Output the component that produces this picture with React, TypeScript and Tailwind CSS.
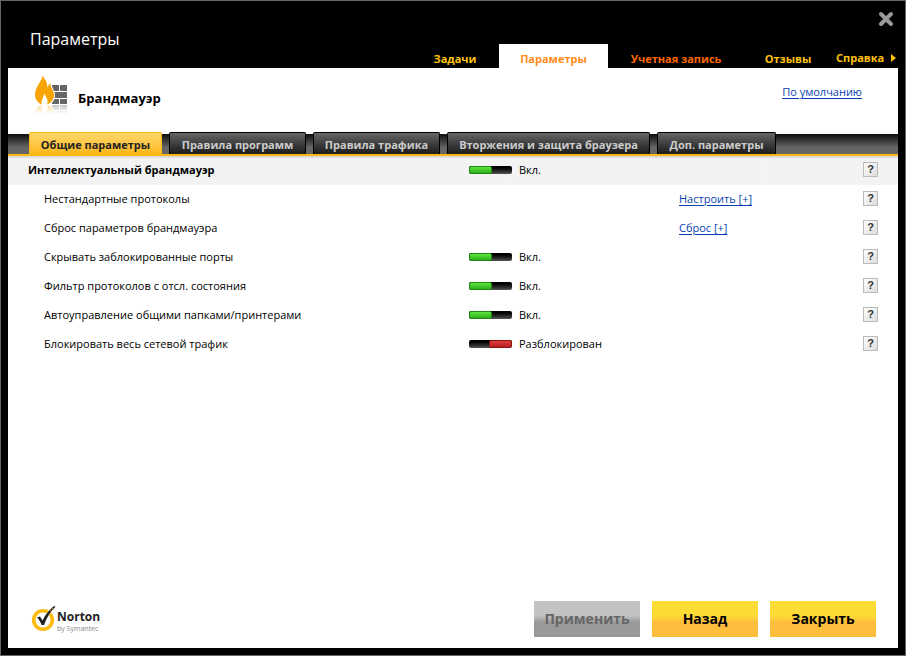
import clsx from 'clsx';

type Setting = {
  label: string;
  heading?: boolean;
  state?: 'on' | 'off';
  status?: string;
  link?: string;
};

const navItems = [
  { label: 'Задачи', className: 'w-[88px] text-[#ffc20e]' },
  { label: 'Параметры', className: 'w-[109px] bg-white text-[#ff8c1a]' },
  { label: 'Учетная запись', className: 'w-[136px] text-[#ff6600]' },
  { label: 'Отзывы', className: 'w-[88px] text-[#ffc20e]' },
];

const tabs = [
  { label: 'Общие параметры', className: 'w-[133px]' },
  { label: 'Правила программ', className: 'w-[137px]' },
  { label: 'Правила трафика', className: 'w-[127px]' },
  { label: 'Вторжения и защита браузера', className: 'w-[203px]' },
  { label: 'Доп. параметры', className: 'w-[119px]' },
];

const settings: Setting[] = [
  { label: 'Интеллектуальный брандмауэр', heading: true, state: 'on', status: 'Вкл.' },
  { label: 'Нестандартные протоколы', link: 'Настроить [+]' },
  { label: 'Сброс параметров брандмауэра', link: 'Сброс [+]' },
  { label: 'Скрывать заблокированные порты', state: 'on', status: 'Вкл.' },
  { label: 'Фильтр протоколов с отсл. состояния', state: 'on', status: 'Вкл.' },
  { label: 'Автоуправление общими папками/принтерами', state: 'on', status: 'Вкл.' },
  { label: 'Блокировать весь сетевой трафик', state: 'off', status: 'Разблокирован' },
];

function FirewallArt() {
  return (
    <>
      <path d="M17 10h7v6h-7zM25 10h7v6h-7zM19 17h13v6H19zM17 24h7v5h-7zM25 24h7v5h-7z" fill="#666" />
      <path
        d="M7.500 0C8 5 0 12 0 19.500 0 24 2.500 28 7 29.500c-1.500-4.500 1.500-6.500 2.500-11 1.500 4.500 4.500 6.500 2.500 11 4.500-1.500 7-5.500 7-9.500 0-5-4-7-3.500-12-2 1.500-2.500 3-2.500 5-.5-1-.8-2.500-1-4C11.500 4.500 8.500 4 7.500 0z"
        fill="#f7a400"
        stroke="#fff"
        strokeWidth="2"
        paintOrder="stroke"
      />
    </>
  );
}

function FirewallIcon() {
  return (
    <svg width="34" height="40" viewBox="0 0 34 40" aria-hidden="true">
      <defs>
        <linearGradient id="fade" x1="0" y1="29" x2="0" y2="39" gradientUnits="userSpaceOnUse">
          <stop offset="0" stopColor="#fff" stopOpacity="0.600" />
          <stop offset="1" stopColor="#fff" />
        </linearGradient>
      </defs>
      <g transform="matrix(1 0 0 -1 0 59)">
        <FirewallArt />
      </g>
      <rect x="-1" y="-1" width="36" height="31" fill="#fff" />
      <rect x="-1" y="30" width="36" height="11" fill="url(#fade)" />
      <FirewallArt />
    </svg>
  );
}

function NortonLogo() {
  return (
    <div className="flex items-center">
      <svg width="26" height="28" viewBox="0 0 26 28" aria-hidden="true">
        <circle cx="12" cy="15" r="9.300" fill="none" stroke="#fdbb11" strokeWidth="3.600" />
        <path
          d="M6 12.500l3-1 2.500 4C14 10 18 5 23 1l1.500.8C19 7 15.500 13 13 20h-2.500C9.500 17 8 14.500 6 12.500z"
          fill="#222"
          stroke="#fff"
          strokeWidth="1"
          paintOrder="stroke"
        />
        <path d="M18.500 4.500l2 2M20.500 2.800l1.500 1.500" stroke="#fdbb11" strokeWidth="0.800" />
      </svg>
      <div className="flex flex-col pt-1.5">
        <span className="text-[12px] leading-[14px] font-bold text-[#222]">Norton</span>
        <span className="text-[7px] leading-[10px] text-[#888]">by Symantec</span>
      </div>
    </div>
  );
}

function Toggle({ label, state }: { label: string; state: 'on' | 'off' }) {
  const on = state === 'on';
  return (
    <button
      type="button"
      role="switch"
      aria-checked={on}
      aria-label={label}
      className="flex h-2 w-[43px] overflow-hidden rounded-xs bg-linear-to-b from-black via-[#1c1c1c] to-[#555]"
    >
      <span
        className={clsx(
          'h-2 w-[23px] rounded-xs border',
          on
            ? 'border-[#1f8a12] bg-linear-to-b from-[#5ce63c] to-[#2fae1c]'
            : 'ml-auto border-[#8a1414] bg-linear-to-b from-[#e04040] to-[#b81c1c]',
        )}
      />
    </button>
  );
}

function SettingRow({ setting }: { setting: Setting }) {
  return (
    <li
      className={clsx(
        'grid h-[29px] grid-cols-[461fr_210fr_184fr_35fr] items-center pb-0.5',
        setting.heading && 'bg-linear-to-b from-[#d0d0d0] to-[#f3f3f3] to-10%',
      )}
    >
      <span className={clsx('whitespace-nowrap', setting.heading ? 'pl-5 font-bold' : 'pl-9')}>
        {setting.label}
      </span>
      <span className="flex items-center gap-[7px]">
        {setting.state && <Toggle label={setting.label} state={setting.state} />}
        {setting.status}
      </span>
      <span>
        {setting.link && (
          <a href="#" className="text-[#0a3fae] underline underline-offset-2">
            {setting.link}
          </a>
        )}
      </span>
      <button
        type="button"
        aria-label={`Справка: ${setting.label}`}
        className="flex size-[15px] items-center justify-center border border-[#bbb] bg-linear-to-br from-white to-[#ddd] font-['Liberation_Sans',sans-serif] text-[11px] leading-none font-bold text-[#333]"
      >
        ?
      </button>
    </li>
  );
}

export default function App() {
  return (
    <div className="flex min-h-screen flex-col border border-[#666] bg-black p-[7px] pt-0 font-['Open_Sans','Noto_Sans',sans-serif] text-[11px] leading-4 text-black">
      <header className="flex h-[67px] justify-between">
        <h1 className="pt-[26px] pl-[22px] text-[16px] leading-6 text-white">Параметры</h1>
        <div className="flex flex-col items-end justify-between">
          <button type="button" aria-label="Закрыть окно" className="mt-[10px] mr-1">
            <svg width="16" height="16" viewBox="0 0 16 16" aria-hidden="true">
              <path d="M3 3l10 10M13 3L3 13" stroke="#999" strokeWidth="4" strokeLinecap="round" />
            </svg>
          </button>
          <nav className="flex font-bold">
            {navItems.map((item) => (
              <a
                key={item.label}
                href="#"
                className={clsx('flex h-6 items-center justify-center pt-1.5 whitespace-nowrap', item.className)}
              >
                {item.label}
              </a>
            ))}
            <button type="button" className="flex h-6 w-[66px] items-center gap-[7px] pt-1 pl-1 text-[#ffc20e]">
              Справка
              <svg width="5" height="8" viewBox="0 0 5 8" aria-hidden="true">
                <path d="M0 0l5 4-5 4z" fill="#ffc20e" />
              </svg>
            </button>
          </nav>
        </div>
      </header>

      <main className="flex flex-1 flex-col bg-white">
        <div className="flex h-16 items-start justify-between pr-9 pl-[27px]">
          <div className="flex items-start gap-[9px] pt-[7px]">
            <FirewallIcon />
            <h2 className="pt-[13px] text-[13px] leading-5 font-bold">Брандмауэр</h2>
          </div>
          <a href="#" className="mt-4 text-[#0a3fae] underline underline-offset-2">
            По умолчанию
          </a>
        </div>

        <div className="border-b-2 border-[#fdb813] bg-linear-to-b from-white from-10% via-[#111] via-10% to-[#666] to-70%">
          <div role="tablist" className="flex gap-[7px] pl-[21px]">
            {tabs.map((tab, i) => (
              <button
                key={tab.label}
                type="button"
                role="tab"
                aria-selected={i === 0}
                className={clsx(
                  'flex h-[22px] items-center justify-center rounded-t-xs border border-b-0 pt-0.5 font-bold whitespace-nowrap',
                  tab.className,
                  i === 0
                    ? 'border-[#fdb813] bg-linear-to-b from-[#ffd768] to-[#fdb813] text-[#222]'
                    : 'border-black bg-linear-to-b from-[#666] to-[#1c1c1c] text-[#ccc]',
                )}
              >
                {tab.label}
              </button>
            ))}
          </div>
        </div>

        <ul>
          {settings.map((setting) => (
            <SettingRow key={setting.label} setting={setting} />
          ))}
        </ul>

        <footer className="mt-auto flex items-center justify-between pr-[22px] pb-[11px] pl-[23px]">
          <NortonLogo />
          <div className="flex gap-3 text-[14px] font-bold">
            <button
              type="button"
              disabled
              className="h-9 w-[106px] bg-linear-to-b from-[#c3c3c3] from-40% to-[#999] to-60% text-[#666]"
            >
              Применить
            </button>
            <button type="button" className="h-9 w-[106px] bg-linear-to-b from-[#fddc35] from-40% to-[#fdbd3d] to-60%">
              Назад
            </button>
            <button type="button" className="h-9 w-[106px] bg-linear-to-b from-[#fddc35] from-40% to-[#fdbd3d] to-60%">
              Закрыть
            </button>
          </div>
        </footer>
      </main>
    </div>
  );
}
